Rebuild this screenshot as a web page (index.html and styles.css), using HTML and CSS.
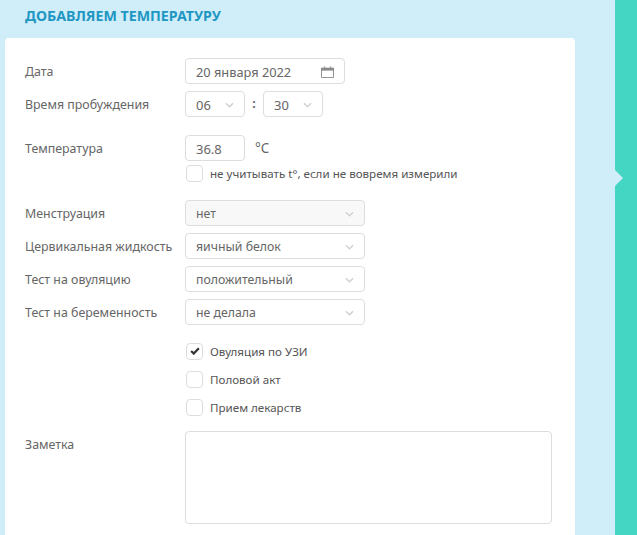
FILE: index.html
```html
<!DOCTYPE html>
<html lang="ru">
  <head>
    <meta charset="UTF-8" />
    <title>Добавляем температуру</title>
    <link rel="stylesheet" href="styles.css">
  </head>

  <body>
    <div class="page">
      <div class="main-content">
        <h1>Добавляем температуру</h1>

        <div class="card">
          <!-- Дата и время -->
          <div class="row row-date">
            <div class="label">Дата</div>
            <div class="field field-date">
              <span>20 января 2022</span>
              <svg class="calendar" width="13" height="12" viewBox="0 0 14 13">
                <path d="M0.5 2.5h13v10h-13z" fill="none" stroke="#8a8a8a" />
                <path d="M0 2h14v3H0z" fill="#8a8a8a" />
                <path d="M3 0.5h1.5V2H3zM9.5 0.5H11V2H9.5z" fill="#8a8a8a" />
              </svg>
            </div>
          </div>
          <div class="row row-time">
            <div class="label">Время пробуждения</div>
            <div class="field field-small">
              <span>06</span>
              <svg class="arrow" width="9" height="6" viewBox="0 0 10 6"><path d="M1 1l4 4 4-4" /></svg>
            </div>
            <span class="colon">:</span>
            <div class="field field-small">
              <span>30</span>
              <svg class="arrow" width="9" height="6" viewBox="0 0 10 6"><path d="M1 1l4 4 4-4" /></svg>
            </div>
          </div>

          <!-- Температура -->
          <div class="row row-temp">
            <div class="label">Температура</div>
            <div class="field field-small">36.8</div>
            <span class="unit">°C</span>
          </div>
          <div class="check-row check-temp">
            <span class="checkbox"></span>
            <span>не учитывать t°, если не вовремя измерили</span>
          </div>

          <!-- Селекты -->
          <div class="selects">
            <div class="row">
              <div class="label">Менструация</div>
              <div class="field field-select disabled">
                <span>нет</span>
                <svg class="arrow" width="9" height="6" viewBox="0 0 10 6"><path d="M1 1l4 4 4-4" /></svg>
              </div>
            </div>
            <div class="row">
              <div class="label">Цервикальная жидкость</div>
              <div class="field field-select">
                <span>яичный белок</span>
                <svg class="arrow" width="9" height="6" viewBox="0 0 10 6"><path d="M1 1l4 4 4-4" /></svg>
              </div>
            </div>
            <div class="row">
              <div class="label">Тест на овуляцию</div>
              <div class="field field-select">
                <span>положительный</span>
                <svg class="arrow" width="9" height="6" viewBox="0 0 10 6"><path d="M1 1l4 4 4-4" /></svg>
              </div>
            </div>
            <div class="row">
              <div class="label">Тест на беременность</div>
              <div class="field field-select">
                <span>не делала</span>
                <svg class="arrow" width="9" height="6" viewBox="0 0 10 6"><path d="M1 1l4 4 4-4" /></svg>
              </div>
            </div>
          </div>

          <!-- Чекбоксы -->
          <div class="checks">
            <div class="check-row">
              <span class="checkbox">
                <svg width="10" height="8" viewBox="0 0 12 10"><path d="M1.2 5l3.2 3.2L10.8 1.6" /></svg>
              </span>
              <span>Овуляция по УЗИ</span>
            </div>
            <div class="check-row">
              <span class="checkbox"></span>
              <span>Половой акт</span>
            </div>
            <div class="check-row">
              <span class="checkbox"></span>
              <span>Прием лекарств</span>
            </div>
          </div>

          <!-- Заметка -->
          <div class="row row-note">
            <div class="label">Заметка</div>
            <div class="note"></div>
          </div>
        </div>
      </div>

      <div class="sidebar"></div>
    </div>
  </body>
</html>
```

FILE: styles.css
```css
* {
  margin: 0;
  padding: 0;
  box-sizing: border-box;
  font-family: "Noto Sans", Arial, sans-serif;
}

html, body {
  height: 100%;
  overflow: hidden;
}

.page {
  display: flex;
  height: 535px;
}

.main-content {
  width: 615px;
  background-color: #d0eefa;
  padding: 0 40px 0 5px;
  overflow: hidden;
}

h1 {
  height: 38px;
  padding: 7px 0 0 20px;
  font-size: 14.2px;
  line-height: 18px;
  font-weight: 700;
  text-transform: uppercase;
  color: #1e97c2;
}

.card {
  height: 520px;
  background-color: #fff;
  border-radius: 4px;
  padding: 20px 23px 0 20px;
  font-size: 12.4px;
  color: #666;
}

.row {
  display: flex;
  align-items: flex-start;
}

.label {
  width: 160px;
  height: 26px;
  flex-shrink: 0;
  line-height: 27px;
}

.field {
  display: flex;
  align-items: center;
  justify-content: space-between;
  height: 26px;
  padding: 1px 10px 0 10px;
  background-color: #fff;
  border: 1px solid #ddd;
  border-radius: 4px;
  color: #666;
}

.field-date {
  width: 160px;
  font-size: 12.8px;
}

.field-small {
  width: 60px;
  font-size: 13px;
}

.field-select {
  width: 180px;
  font-size: 12.3px;
}

.disabled {
  background-color: #f8f8f8;
}

.arrow path {
  fill: none;
  stroke: #d0d0d0;
  stroke-width: 1.5;
}

.row-time {
  margin-top: 7px;
}

.colon {
  width: 18px;
  text-align: center;
  line-height: 26px;
  font-weight: 700;
}

.row-temp {
  margin-top: 18px;
}

.unit {
  margin-left: 10px;
  font-size: 13.5px;
  line-height: 26px;
}

.check-row {
  display: flex;
  align-items: center;
  gap: 7px;
  height: 18px;
  font-size: 11.6px;
  color: #555;
}

.check-temp {
  margin: 3px 0 0 161px;
}

.checkbox {
  display: flex;
  align-items: center;
  justify-content: center;
  width: 17px;
  height: 17px;
  border: 1px solid #ddd;
  border-radius: 4px;
  background-color: #fff;
}

.checkbox path {
  fill: none;
  stroke: #333;
  stroke-width: 2.8;
}

.selects {
  display: flex;
  flex-direction: column;
  gap: 7px;
  margin-top: 18px;
}

.checks {
  display: flex;
  flex-direction: column;
  gap: 10px;
  margin: 17px 0 0 161px;
}

.row-note {
  margin-top: 15px;
}

.note {
  width: 367px;
  height: 93px;
  border: 1px solid #ddd;
  border-radius: 4px;
}

.sidebar {
  position: relative;
  flex: 1;
  background-color: #45d6c3;
}

/* стрелка на границе панели */
.sidebar::before {
  content: "";
  position: absolute;
  left: 0;
  top: 170px;
  border-left: 8px solid #d0eefa;
  border-top: 8px solid transparent;
  border-bottom: 8px solid transparent;
}
```
